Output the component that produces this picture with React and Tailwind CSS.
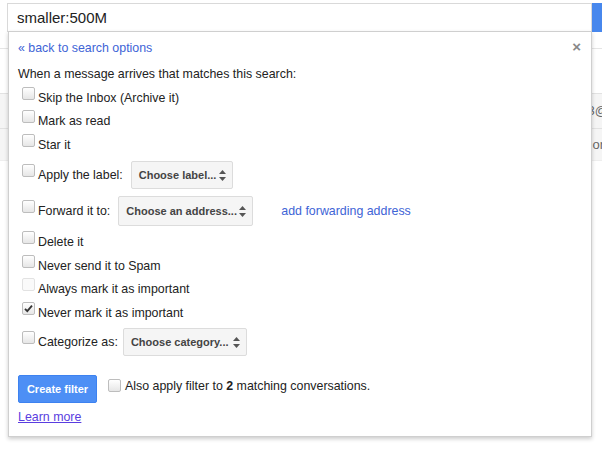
import React from 'react';

function Box({ checked, disabled }) {
  return (
    <span
      className={`relative inline-block h-[13px] w-[13px] shrink-0 rounded-[2px] border ${
        disabled
          ? 'border-[#e2e2e2] bg-[#fafafa]'
          : 'border-[#bdbdbd] bg-[linear-gradient(#ffffff,#e6e6e6)]'
      }`}
    >
      {checked && (
        <svg viewBox="0 0 13 13" className="absolute left-[-1px] top-[-1px] h-[13px] w-[13px]">
          <path d="M3 6.8 L5.3 9.2 L10 3.6" fill="none" stroke="#333" strokeWidth="1.8" />
        </svg>
      )}
    </span>
  );
}

function Select({ label, w, h }) {
  return (
    <div
      className={`flex items-center justify-between rounded-[2px] border border-[#dcdcdc] bg-[#f5f5f5] pl-[7px] pr-[6px] text-[11px] font-bold text-[#444] ${w} ${h}`}
    >
      <span>{label}</span>
      <svg viewBox="0 0 7 11" className="h-[11px] w-[7px]">
        <path d="M3.5 0 L7 4 L0 4 Z M0 7 L7 7 L3.5 11 Z" fill="#555" />
      </svg>
    </div>
  );
}

function Row({ className = '', checked, disabled, children }) {
  return (
    <div className={`flex items-center pl-[4px] ${className}`}>
      <span className="-mt-[3px]">
        <Box checked={checked} disabled={disabled} />
      </span>
      <div className="ml-[3px] flex items-center">{children}</div>
    </div>
  );
}

export default function App() {
  return (
    <div className="relative h-[464px] w-[602px] overflow-hidden bg-white font-['Liberation_Sans',Arial,sans-serif] text-[12.4px] text-[#222]">
      {/* search bar */}
      <div className="flex pl-[7px] pt-[3px]">
        <div className="flex h-[29px] flex-1 items-center border border-b-0 border-[#d9d9d9] pl-[9px] text-[15px] text-[#222]">
          smaller:500M
        </div>
        <div className="h-[29px] w-[10px] bg-[#4787ed]" />
      </div>

      {/* page behind */}
      <div className="mt-[16px] h-px bg-[#e5e5e5]" />
      <div className="mt-[44px] flex flex-col">
        <div className="flex h-[35px] items-center justify-end border-t border-[#e2e2e2] bg-[#f5f5f5] text-[13px] text-[#666]">
          <span className="mr-[-6px]">3@</span>
        </div>
        <div className="flex h-[32px] items-center justify-end border-t border-[#e2e2e2] bg-[#f5f5f5] text-[13px] text-[#666]">
          <span className="mr-[-2px]">or</span>
        </div>
        <div className="h-px bg-[#eeeeee]" />
      </div>

      {/* filter panel */}
      <div className="absolute left-[8px] top-[31px] flex h-[406px] w-[584px] flex-col border border-[#cfcfcf] bg-white pl-[9px] pt-[8px] shadow-[0_2px_4px_rgba(0,0,0,0.2)]">
        <div className="flex h-[16px] items-center justify-between pr-[10px]">
          <span className="text-[#4064d6]">« back to search options</span>
          <span className="-mt-[4px] text-[15px] font-bold leading-none text-[#888]">×</span>
        </div>
        <div className="mt-[10px] h-[16px] leading-[16px]">When a message arrives that matches this search:</div>

        <Row className="mt-[5px] h-[22px]">Skip the Inbox (Archive it)</Row>
        <Row className="mt-[1px] h-[22px]">Mark as read</Row>
        <Row className="mt-[2px] h-[22px]">Star it</Row>
        <Row className="mt-[5px] h-[28px]">
          <span>Apply the label:</span>
          <span className="ml-[8px]">
            <Select label="Choose label..." w="w-[102px]" h="h-[28px]" />
          </span>
        </Row>
        <Row className="mt-[7px] h-[30px]">
          <span>Forward it to:</span>
          <span className="ml-[8px]">
            <Select label="Choose an address..." w="w-[135px]" h="h-[30px]" />
          </span>
          <span className="ml-[28px] text-[#4064d6]">add forwarding address</span>
        </Row>
        <Row className="mt-[5px] h-[22px]">Delete it</Row>
        <Row className="mt-[2px] h-[22px]">Never send it to Spam</Row>
        <Row className="mt-[1px] h-[22px]" disabled>Always mark it as important</Row>
        <Row className="mt-[2px] h-[22px]" checked>Never mark it as important</Row>
        <Row className="mt-[4px] h-[28px]">
          <span>Categorize as:</span>
          <span className="ml-[5px]">
            <Select label="Choose category..." w="w-[124px]" h="h-[28px]" />
          </span>
        </Row>

        <div className="mt-[19px] flex items-start">
          <div className="flex h-[28px] w-[79px] items-center justify-center rounded-[2px] border border-[#3d82f0] bg-[#4d8ff5] text-[11px] font-bold text-white">
            Create filter
          </div>
          <span className="ml-[11px] mt-[4px]">
            <Box />
          </span>
          <span className="ml-[4px] mt-[2px]">
            Also apply filter to <b>2</b> matching conversations.
          </span>
        </div>
        <div className="mt-[5px] h-[16px]">
          <span className="text-[#5a3de0] underline">Learn more</span>
        </div>
      </div>
    </div>
  );
}
